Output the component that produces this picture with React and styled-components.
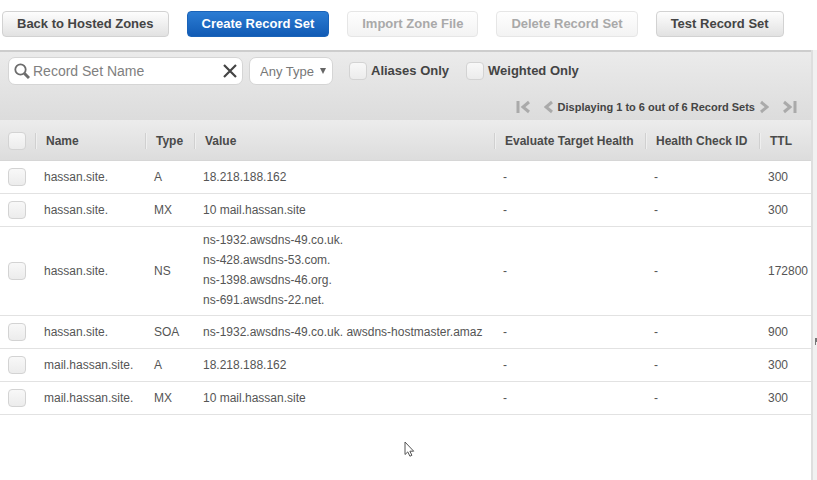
import React from "react";
import styled, { createGlobalStyle } from "styled-components";

const GlobalStyle = createGlobalStyle`
  *, *::before, *::after { box-sizing: border-box; }
  html, body, #root { height: 100%; }
  body {
    margin: 0;
    background: #fff;
    color: #444;
    font-family: "Liberation Sans", Arial, sans-serif;
    font-size: 12px;
  }
  button, input, select { font-family: inherit; }
`;

const Page = styled.div`
  display: flex;
  flex-direction: column;
  min-height: 100%;
  position: relative;
  overflow: hidden;
`;

const Toolbar = styled.header`
  display: flex;
  align-items: flex-start;
  gap: 18px;
  padding: 11px 2px 13px;
`;

const variants = {
  normal: { bg: "linear-gradient(#fdfdfd, #e2e2e2)", border: "#d2d2d2", color: "#444" },
  primary: { bg: "linear-gradient(#2b7cd3, #115bb5)", border: "#1a63b8", color: "#fff" },
  disabled: { bg: "linear-gradient(#fefefe, #f3f3f3)", border: "#e6e6e6", color: "#a9a9a9" },
};

const ToolButton = styled.button`
  height: 26px;
  padding: 0 14px;
  border: 1px solid ${(p) => variants[p.$variant].border};
  border-radius: 4px;
  background: ${(p) => variants[p.$variant].bg};
  color: ${(p) => variants[p.$variant].color};
  font-size: 13px;
  font-weight: bold;
  line-height: 24px;
  white-space: nowrap;
`;

const Body = styled.div`
  display: flex;
  flex: 1;
`;

const Main = styled.main`
  flex: 1;
  min-width: 0;
`;

const Splitter = styled.div`
  display: flex;
  justify-content: flex-end;
  width: 6px;
  padding-top: 288px;
  border-left: 2px solid #dedede;
  background: #f1f1f1;
`;

const FilterPanel = styled.section`
  height: 70px;
  border-top: 2px solid #cdcdcd;
  background: linear-gradient(#ebebeb, #dcdcdc);
`;

const Filters = styled.form`
  display: flex;
  align-items: center;
  height: 38px;
  padding-left: 8px;
`;

const SearchBox = styled.label`
  display: flex;
  align-items: center;
  width: 235px;
  height: 28px;
  padding: 0 5px;
  border: 1px solid #d5d5d5;
  border-radius: 7px;
  background: #fff;
`;

const SearchInput = styled.input`
  flex: 1;
  min-width: 0;
  padding: 0 3px;
  border: 0;
  outline: 0;
  background: transparent;
  font-size: 14px;
  color: #444;
  &::placeholder { color: #808080; opacity: 1; }
`;

const IconButton = styled.button`
  display: flex;
  padding: 0;
  border: 0;
  background: none;
`;

const SelectBox = styled.div`
  display: flex;
  align-items: center;
  width: 84px;
  height: 28px;
  margin: 0 16px 0 6px;
  padding-right: 6px;
  border: 1px solid #d5d5d5;
  border-radius: 7px;
  background: #fff;
`;

const TypeSelect = styled.select`
  flex: 1;
  min-width: 0;
  height: 26px;
  padding: 0 0 0 10px;
  border: 0;
  outline: 0;
  appearance: none;
  background: transparent;
  color: #777;
  font-size: 13px;
`;

const CheckLabel = styled.label`
  display: flex;
  align-items: center;
  gap: 4px;
  margin-right: 17px;
  color: #444;
  font-size: 13px;
  font-weight: bold;
  line-height: 16px;
  white-space: nowrap;
`;

const Check = styled.input.attrs({ type: "checkbox" })`
  display: block;
  flex: none;
  appearance: none;
  width: 18px;
  height: 18px;
  margin: 0;
  border: 1px solid #d3d3d3;
  border-radius: 4px;
  background: linear-gradient(#f8f8f8, #ececec);
`;

const Pager = styled.nav`
  display: flex;
  align-items: center;
  justify-content: flex-end;
  height: 30px;
  padding: 4px 14px 0 0;
  color: #444;
  font-size: 11px;
  font-weight: bold;
`;

const PageStatus = styled.span`
  margin: 0 5px;
`;

const PageGap = styled.span`
  width: 14px;
`;

const Records = styled.table`
  width: 100%;
  table-layout: fixed;
  border-collapse: separate;
  border-spacing: 0;
`;

const Col = styled.col`
  width: ${(p) => p.$width};
`;

const HeadRow = styled.tr`
  height: 41px;
  background: linear-gradient(#ececec, #dcdcdc);
`;

const HeadCell = styled.th`
  padding: 1px 0 0;
  border-bottom: 1px solid #d6d6d6;
  color: #4a4a4a;
  font-size: 12px;
  font-weight: bold;
  line-height: 16px;
  text-align: left;
  white-space: nowrap;
`;

const CheckHeadCell = styled(HeadCell)`
  padding-left: 8px;
`;

const HeadText = styled.div`
  padding-left: 10px;
  border-left: 1px solid #d0d0d0;
  box-shadow: inset 1px 0 #efefef;
`;

const Row = styled.tr`
  height: 33px;
`;

const Cell = styled.td`
  padding: ${(p) => (p.$multi ? "3px 9px 5px" : "0 9px")};
  border-bottom: 1px solid #e2e2e2;
  color: #555;
  line-height: 20px;
  white-space: nowrap;
`;

const CheckCell = styled(Cell)`
  padding: 0 8px;
`;

const ValueLine = styled.div`
  overflow: hidden;
`;

const Pointer = styled.svg`
  position: absolute;
  left: 404px;
  top: 441px;
  pointer-events: none;
`;

const records = [
  ["hassan.site.", "A", ["18.218.188.162"], "300"],
  ["hassan.site.", "MX", ["10 mail.hassan.site"], "300"],
  [
    "hassan.site.",
    "NS",
    ["ns-1932.awsdns-49.co.uk.", "ns-428.awsdns-53.com.", "ns-1398.awsdns-46.org.", "ns-691.awsdns-22.net."],
    "172800",
  ],
  ["hassan.site.", "SOA", ["ns-1932.awsdns-49.co.uk. awsdns-hostmaster.amaz"], "900"],
  ["mail.hassan.site.", "A", ["18.218.188.162"], "300"],
  ["mail.hassan.site.", "MX", ["10 mail.hassan.site"], "300"],
];

const headings = ["Name", "Type", "Value", "Evaluate Target Health", "Health Check ID", "TTL"];

const arrows = {
  First: { width: 14, d: "M2 1v12M13 2L7 7l6 5" },
  Previous: { width: 9, d: "M8 2L2 7l6 5" },
  Next: { width: 9, d: "M1 2l6 5-6 5" },
  Last: { width: 14, d: "M1 2l6 5-6 5M12 1v12" },
};

function PageArrow({ name }) {
  const { width, d } = arrows[name];
  return (
    <IconButton type="button" aria-label={`${name} page`}>
      <svg width={width} height="14" viewBox={`0 0 ${width} 14`} fill="none" stroke="#aaa" strokeWidth="3">
        <path d={d} />
      </svg>
    </IconButton>
  );
}

export default function App() {
  return (
    <Page>
      <GlobalStyle />
      <Toolbar>
        <ToolButton $variant="normal">Back to Hosted Zones</ToolButton>
        <ToolButton $variant="primary">Create Record Set</ToolButton>
        <ToolButton $variant="disabled" disabled>Import Zone File</ToolButton>
        <ToolButton $variant="disabled" disabled>Delete Record Set</ToolButton>
        <ToolButton $variant="normal">Test Record Set</ToolButton>
      </Toolbar>
      <Body>
        <Main>
          <FilterPanel>
            <Filters>
              <SearchBox>
                <svg width="16" height="18" viewBox="0 0 16 18" fill="none" stroke="#6c6c6c">
                  <circle cx="6.5" cy="7.5" r="5.2" strokeWidth="1.8" />
                  <path d="M10.5 11.5L15 16" strokeWidth="3" />
                </svg>
                <SearchInput type="text" aria-label="Record Set Name" placeholder="Record Set Name" />
                <IconButton type="button" aria-label="Clear">
                  <svg width="14" height="14" viewBox="0 0 14 14" fill="none" stroke="#444" strokeWidth="2.2">
                    <path d="M1 1l12 12M13 1L1 13" />
                  </svg>
                </IconButton>
              </SearchBox>
              <SelectBox>
                <TypeSelect aria-label="Record type">
                  <option>Any Type</option>
                </TypeSelect>
                <svg width="6" height="6" viewBox="0 0 6 6" fill="#666">
                  <path d="M0 0h6L3 6z" />
                </svg>
              </SelectBox>
              <CheckLabel><Check />Aliases Only</CheckLabel>
              <CheckLabel><Check />Weighted Only</CheckLabel>
            </Filters>
            <Pager aria-label="Record set pages">
              <PageArrow name="First" />
              <PageGap />
              <PageArrow name="Previous" />
              <PageStatus>Displaying 1 to 6 out of 6 Record Sets</PageStatus>
              <PageArrow name="Next" />
              <PageGap />
              <PageArrow name="Last" />
            </Pager>
          </FilterPanel>
          <Records>
            <colgroup>
              <Col $width="35px" />
              <Col $width="110px" />
              <Col $width="49px" />
              <Col $width="auto" />
              <Col $width="151px" />
              <Col $width="114px" />
              <Col $width="52px" />
            </colgroup>
            <thead>
              <HeadRow>
                <CheckHeadCell><Check aria-label="Select all" /></CheckHeadCell>
                {headings.map((h) => (
                  <HeadCell key={h} scope="col"><HeadText>{h}</HeadText></HeadCell>
                ))}
              </HeadRow>
            </thead>
            <tbody>
              {records.map(([name, type, values, ttl]) => (
                <Row key={name + type}>
                  <CheckCell><Check aria-label={`Select ${name} ${type}`} /></CheckCell>
                  <Cell>{name}</Cell>
                  <Cell>{type}</Cell>
                  <Cell $multi={values.length > 1}>
                    {values.map((v) => <ValueLine key={v}>{v}</ValueLine>)}
                  </Cell>
                  <Cell>-</Cell>
                  <Cell>-</Cell>
                  <Cell>{ttl}</Cell>
                </Row>
              ))}
            </tbody>
          </Records>
        </Main>
        <Splitter>
          <svg width="2" height="7" viewBox="0 0 2 7" fill="#777"><path d="M0 0h2v4H1v3H0z" /></svg>
        </Splitter>
      </Body>
      <Pointer width="11" height="17" viewBox="0 0 11 17" fill="#fff" stroke="#555">
        <path d="M1 1v12.5l2.8-2.6 2.1 4.3 2-.9-2-4.1h3.8z" />
      </Pointer>
    </Page>
  );
}
